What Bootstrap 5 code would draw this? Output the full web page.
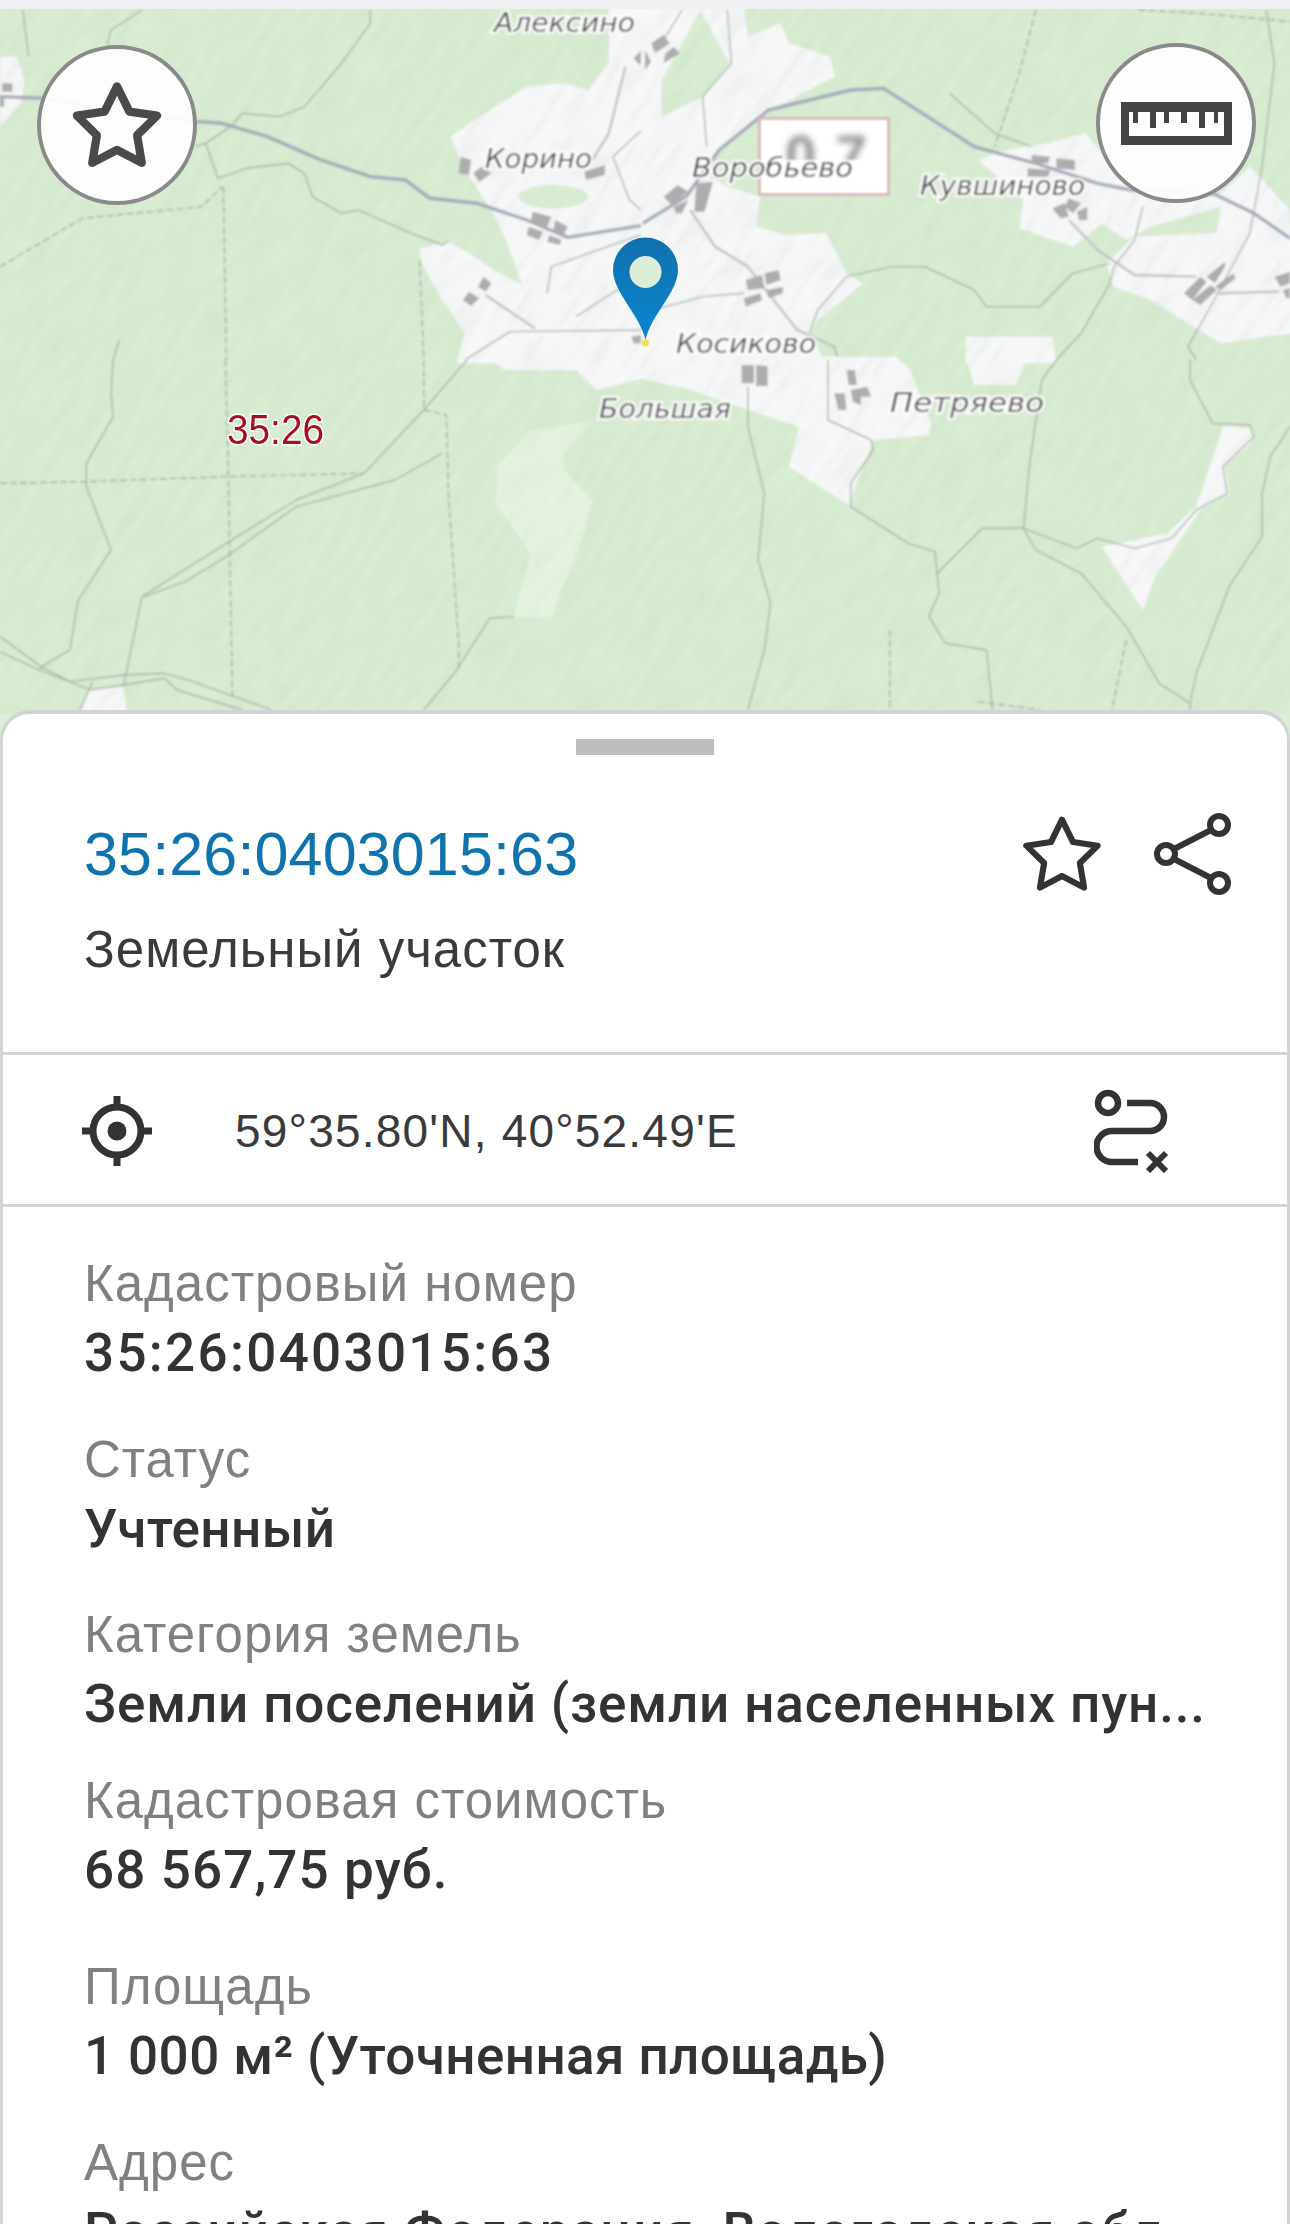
<!DOCTYPE html>
<html lang="ru">
<head>
<meta charset="UTF-8">
<title>Земельный участок</title>
<link href="https://cdn.jsdelivr.net/npm/bootstrap@5.3.3/dist/css/bootstrap.min.css" rel="stylesheet">
<style>
  body { font-family: "Liberation Sans", Arial, sans-serif; color: #333; background: #dcefd6; }
  .top-strip { height: 9px; background: #f0f0f2; }
  .map-wrap { height: 705px; }
  .map-svg { display: block; width: 1290px; height: 705px; }
  .tile path, .tile ellipse { vector-effect: non-scaling-stroke; }
  .snow { fill: #f8f8fa; stroke: none; }
  .green { fill: #d9edd3; stroke: none; }
  .pale { fill: #e6f3e1; stroke: none; }
  .bld { fill: #adadad; stroke: none; }
  .ln { fill: none; stroke: #aab4aa; stroke-width: 1.4; stroke-linejoin: round; }
  .ln2 { fill: none; stroke: #c0c3c3; stroke-width: 2.4; stroke-linejoin: round; }
  .dash { fill: none; stroke: #a5b1a5; stroke-width: 1.4; stroke-dasharray: 7 3; }
  .road { fill: none; stroke: #a6abb9; stroke-width: 3.4; stroke-linejoin: round; }
  .place { font-family: "DejaVu Sans", sans-serif; font-style: oblique; font-size: 26px; fill: #555; stroke: #fff; stroke-width: 4px; paint-order: stroke; }
  .zone { font-family: "Liberation Sans", sans-serif; font-size: 42px; fill: #a80f1d; stroke: #fff; stroke-width: 3px; paint-order: stroke; }
  .map-btn { width: 160px; height: 160px; background: rgba(255,255,255,.93); border: 4px solid #8a8a8a; }
  .btn-star { left: 37px; top: 36px; }
  .btn-ruler { left: 1096px; top: 34px; }
  .sheet { margin-top: -4px; background: #fff; border: 3px solid #d2d3d5; border-top-width: 4px; border-bottom: 0; border-radius: 30px 30px 0 0; z-index: 2; }
  .grab { width: 138px; height: 16px; background: #bdbdbf; margin-bottom: 64px; }
  .sheet-head { padding: 25px 81px 72px; }
  .cad-title { font-size: 61px; line-height: 70px; letter-spacing: .15px; color: #0f73ad; }
  .cad-sub { font-size: 51px; line-height: 60px; letter-spacing: 1px; margin-top: 31px; color: #3a3a3a; }
  .title-icons { right: 55px; top: 99px; gap: 51px; }
  .coords { height: 155px; padding: 3px 81px 0 79px; border-top: 3px solid #d2d3d5; border-bottom: 3px solid #d2d3d5; font-size: 46px; letter-spacing: 1.2px; color: #3a3a3a; }
  .coord-text { margin-left: 83px; }
  .route-ico { margin-left: auto; margin-right: 34px; }
  .facts { padding: 42px 60px 0 81px; }
  .fact { margin-bottom: 37.500px; }
  .fact-tight { margin-bottom: 28px; }
  .fact-loose { margin-bottom: 48px; }
  .fact-key { font-size: 51px; line-height: 70px; letter-spacing: 1px; color: #808080; }
  .fact-val { font-size: 53px; line-height: 68px; font-family: Roboto, "Liberation Sans", sans-serif; font-weight: 500; letter-spacing: .4px; color: #333; white-space: nowrap; }
  .val-digits { letter-spacing: 2.300px; }
  .val-mixed { letter-spacing: 1.100px; }
  .val-wide { letter-spacing: .85px; }
  .val-address { letter-spacing: 1.100px; }
</style>
</head>
<body class="vh-100 overflow-hidden">

<div class="top-strip"></div>

<div class="map-wrap position-relative">
  <svg class="map-svg" viewBox="0 9 1290 705" xmlns="http://www.w3.org/2000/svg">
    <defs>
      <filter id="soft" x="0" y="0" width="100%" height="100%"><feGaussianBlur stdDeviation="0.9"/></filter>
      <filter id="hill" filterUnits="userSpaceOnUse" x="-900" y="-900" width="3200" height="3200">
        <feTurbulence type="fractalNoise" baseFrequency="0.02 0.12" numOctaves="3" seed="4"/>
        <feColorMatrix values="0 0 0 0 0.42  0 0 0 0 0.56  0 0 0 0 0.42  1.4 0 0 0 -0.52"/>
        <feGaussianBlur stdDeviation="1"/>
      </filter>
      <filter id="blurry"><feGaussianBlur stdDeviation="3"/></filter>
      <linearGradient id="pinFill" x1="0" y1="0" x2="0" y2="1">
        <stop offset="0" stop-color="#1170ad"/>
        <stop offset="1" stop-color="#0a86cf"/>
      </linearGradient>
      <clipPath id="boxClip"><rect x="760" y="120" width="128" height="40"/></clipPath>
    </defs>

    <rect x="0" y="0" width="1290" height="720" fill="#d9edd3"/>

    <g filter="url(#soft)">
      <!-- top left -->
      <g class="tile" transform="scale(.4114 .3333)">
        <path class="snow" d="M0 170L40 170 60 240 50 310 0 380Z"/>
        <path class="snow" d="M1480 20L1480 190 1430 270 1370 250 1280 260 1180 340 1095 410 1130 510 1200 640 1230 720 1270 855 1200 810 1140 760 1090 725 1020 745 1025 790 1075 900 1130 1000 1110 1090 1580 1090 1580 20Z"/>
        <ellipse class="green" cx="1345" cy="590" rx="85" ry="35"/>
        <path class="ln" d="M55 30L70 170M345 30L270 90 260 135M900 30L900 70 830 190 740 320 680 350 590 340 560 380 500 430 475 440M500 430L530 535 600 505 700 490 740 520 760 590 830 640 870 630 1000 700 1075 735 1090 725M290 1020L275 1080"/>
        <path class="ln" d="M1130 1080L1240 995 1568 990M1568 380L1490 470 1530 600 1568 640M1330 880L1340 800 1568 700M1400 950L1500 870 1568 880"/>
        <path class="ln2" d="M1520 200L1480 400 1440 480M1180 885L1300 985"/>
        <path class="dash" d="M0 800L200 655 490 620 540 560M543 560L550 1080M1020 780L1030 1080"/>
        <path class="road" d="M0 290L100 295 480 365 540 370 650 410 780 480 900 530 985 540 1045 595 1160 610 1280 660 1380 712 1568 675"/>
        <path class="bld" d="M1540 175L1568 140 1568 180 1555 195ZM1120 470L1145 480 1140 525 1115 520ZM1150 520L1170 500 1195 520 1165 545ZM1420 515L1470 495 1470 525 1425 540ZM1295 635L1340 650 1330 680 1290 665ZM1350 660L1380 680 1370 705 1345 690ZM1285 680L1320 695 1310 720 1280 705ZM1335 705L1365 720 1360 735 1330 725ZM1175 830L1195 850 1180 875 1162 860ZM1140 875L1165 895 1145 918 1125 900ZM1535 1010L1560 1005 1560 1030 1540 1030ZM5 250L30 250 30 275 5 275ZM0 290L10 290 10 320 0 320Z"/>
      </g>

      <!-- top right -->
      <g class="tile" transform="translate(645 0) scale(.4114 .3333)">
        <path class="snow" d="M-10 20L240 20 250 110 330 70 350 130 450 170 460 230 290 340 180 450 140 520 200 560 280 590 270 680 340 705 440 700 490 820 530 850 420 960 400 1000 440 1090 -10 1090Z"/>
        <path class="green" d="M135 30L165 100 205 190 140 290 40 350 40 240 90 130Z"/>
        <path class="snow" d="M810 480L860 455 980 430 1070 400 1130 490 1250 600 1390 590 1470 500 1568 630 1580 1000 1500 1010 1400 1030 1320 970 1230 900 1140 860 1120 790 1190 710 1390 700 1400 620 1230 680 1170 720 1110 670 1040 740 910 685 920 600Z"/>
        <path class="snow" d="M780 1010L990 1010 1000 1090 780 1090Z"/>
        <path class="ln" d="M90 30L40 130M200 30L210 190 140 290 150 440M20 930L140 890 240 880M490 830L600 800 680 800 800 870 830 920 960 920 1040 820 1130 790M490 830L420 930 400 1000M1210 620L1190 720 1140 800 1130 850 1060 1000 1000 1080M1510 30L1530 190 1500 500 1470 700 1370 930 1320 1040 1340 1080M740 280L850 400 940 440"/>
        <path class="ln2" d="M110 630L170 740 250 800 300 880 370 990 460 1040 470 1080M1030 660L1100 750 1190 825 1340 830M1390 880L1540 875"/>
        <path class="dash" d="M950 30L910 220 850 440M1200 30L1350 40 1568 65"/>
        <path class="road" d="M-5 670L100 590 180 450 300 330 500 270 580 265 800 440 950 490 1100 550 1180 570 1380 580 1480 640 1568 715"/>
        <path class="bld" d="M15 130L45 105 60 130 25 160ZM50 160L70 140 85 160 45 190ZM0 150L15 185 0 210ZM45 590L80 555 105 575 65 615ZM70 620L105 600 90 640 75 640ZM125 550L165 545 145 635 120 635ZM245 840L285 825 290 865 250 870ZM290 820L325 810 330 840 295 855ZM240 895L280 880 285 900 245 920ZM295 870L335 860 335 880 300 895ZM940 465L985 470 980 490 940 490ZM1000 475L1045 480 1045 510 1000 505ZM930 505L985 510 980 530 930 530ZM990 625L1020 610 1030 650 1010 655ZM1030 595L1060 610 1040 640 1020 620ZM1050 635L1075 620 1075 660 1055 660ZM1310 880L1350 830 1365 845 1330 900ZM1330 900L1375 855 1390 870 1350 915ZM1365 830L1410 785 1410 800 1385 850ZM1385 860L1430 820 1435 835 1400 870ZM1530 830L1568 815 1568 850 1545 860ZM1550 870L1568 865 1568 895 1560 895Z"/>
      </g>

      <!-- bottom left -->
      <g class="tile" transform="translate(0 360) scale(.4114 .3333)">
        <path class="snow" d="M1190 -10L1190 0 1230 30 1400 30 1450 90 1580 50 1580 -10ZM215 990L300 980 310 1070 190 1070Z"/>
        <path class="pale" d="M1440 180L1370 280 1370 330 1440 420 1420 520 1340 770 1250 770 1290 580 1205 430 1210 320 1290 210 1340 205Z"/>
        <path class="ln" d="M275 0L270 100 275 170 210 310 210 380 270 570 190 720 170 870 95 925M0 830L100 920 170 965 300 945 400 940 470 965 660 1050M0 875L95 930 220 990 300 975 400 955 430 990 590 1050M1135 0L1030 150 885 340 720 420 550 550 345 710 330 800 300 980M1075 280L960 360 720 440 550 590 450 665 350 710M225 965L195 1050M1250 770L1190 775 1110 930 1030 1050"/>
        <path class="dash" d="M0 370L210 365 550 350 880 340M548 0L555 350 565 1010M1030 0L1030 150 1085 165 1090 400 1115 850 1115 930"/>
      </g>

      <!-- bottom right -->
      <g class="tile" transform="translate(645 360) scale(.4114 .3333)">
        <path class="snow" d="M-10 -10L610 -10 645 30 695 190 690 225 555 240 530 320 495 435 350 320 375 200 250 150 100 85 0 60ZM780 -10L930 -10 900 75 800 75ZM1405 200L1475 205 1475 245 1410 320 1420 400 1350 450 1240 650 1210 750 1110 560 1270 520 1340 440Z"/>
        <path class="ln" d="M250 80L250 200 290 400 275 600 305 730 290 870 250 1050M445 0L445 180 550 240 555 270 500 370 500 440 640 550 705 575 710 640 715 700 690 770 730 850 830 870 845 1050M710 640L820 505 920 505 1050 565 1100 535 1190 565 1280 535 1340 450 1415 400 1405 320 1480 230 1470 195 1380 190 1350 120 1325 60 1325 0M1000 0L965 60 935 310 920 505 950 570 1060 640 1170 800 1250 970 1325 1030 1340 940 1420 680 1500 530 1500 400 1520 290 1568 200M1325 1030L1325 1050"/>
        <path class="dash" d="M595 810L595 1050M1170 840L1135 1050M810 1025L960 1050"/>
        <path class="bld" d="M235 15L265 15 265 70 235 70ZM270 15L298 18 298 78 270 78ZM490 30L510 30 515 75 495 75ZM460 100L485 100 490 150 470 150ZM500 90L540 80 550 110 525 110 525 135 505 125Z"/>
      </g>

      <rect x="-900" y="-900" width="3200" height="3200" transform="rotate(-55 645 360)" filter="url(#hill)" opacity="0.22"/>

      <rect x="759.500" y="118.500" width="129" height="76" fill="#fff" stroke="#d8b9b9" stroke-width="3"/>
      <g clip-path="url(#boxClip)"><text x="785" y="174" font-family="Liberation Sans, sans-serif" font-size="56" font-weight="700" fill="#8e8e8e" filter="url(#blurry)" textLength="82">0.7</text></g>

      <text class="place" x="494" y="32" textLength="141" lengthAdjust="spacingAndGlyphs">Алексино</text>
      <text class="place" x="485" y="168" textLength="107" lengthAdjust="spacingAndGlyphs">Корино</text>
      <text class="place" x="692" y="177" textLength="161" lengthAdjust="spacingAndGlyphs">Воробьево</text>
      <text class="place" x="920" y="195" textLength="165" lengthAdjust="spacingAndGlyphs">Кувшиново</text>
      <text class="place" x="676" y="353" textLength="140" lengthAdjust="spacingAndGlyphs">Косиково</text>
      <text class="place" x="599" y="418" textLength="132" lengthAdjust="spacingAndGlyphs">Большая</text>
      <text class="place" x="890" y="412" textLength="154" lengthAdjust="spacingAndGlyphs">Петряево</text>
    </g>
    <text class="zone" x="227" y="444" textLength="97" lengthAdjust="spacingAndGlyphs">35:26</text>

    <!-- marker -->
    <circle cx="645.500" cy="272" r="17" fill="#dcedd8"/>
    <path d="M645.500 340C640 315 613 292 613 270A32.500 32.500 0 1 1 678 270C678 292 651 315 645.500 340ZM645.500 256A16 16 0 1 0 645.500 288A16 16 0 1 0 645.500 256Z" fill="url(#pinFill)" fill-rule="evenodd"/>
    <circle cx="645.500" cy="343" r="3.500" fill="#f3e14f"/>
  </svg>

  <button class="map-btn btn btn-star position-absolute rounded-circle d-flex align-items-center justify-content-center p-0" type="button" aria-label="Избранное">
    <svg width="92" height="90" viewBox="0 0 100 98"><path d="M50 7L63.500 34.400 93.700 38.800 71.900 60.100 77 90.200 50 76 23 90.200 28.100 60.100 6.300 38.800 36.500 34.400Z" fill="none" stroke="#4a4a4a" stroke-width="9" stroke-linejoin="round"/></svg>
  </button>
  <button class="map-btn btn btn-ruler position-absolute rounded-circle d-flex align-items-center justify-content-center p-0" type="button" aria-label="Линейка">
    <svg width="111" height="43" viewBox="0 0 111 43"><path d="M0 0H111V43H0ZM8 10V34H103V10H97V21H93V10H84V26H78V10H66V21H60V10H48V21H43V10H35V26H29V10H17V21H12V10Z" fill="#444" fill-rule="evenodd"/></svg>
  </button>
</div>

<div class="sheet position-relative">
  <div class="sheet-head position-relative">
    <div class="grab mx-auto"></div>
    <div class="cad-title">35:26:0403015:63</div>
    <div class="cad-sub">Земельный участок</div>
    <div class="title-icons position-absolute d-flex align-items-center">
      <svg width="82" height="80" viewBox="0 0 100 98"><path d="M50 7L63.500 34.400 93.700 38.800 71.900 60.100 77 90.200 50 76 23 90.200 28.100 60.100 6.300 38.800 36.500 34.400Z" fill="none" stroke="#333" stroke-width="7.500" stroke-linejoin="round"/></svg>
      <svg width="78" height="82" viewBox="0 0 78 82" fill="none" stroke="#333" stroke-width="6"><circle cx="65" cy="12" r="9"/><circle cx="12" cy="41" r="9"/><circle cx="65" cy="70" r="9"/><path d="M20 36L57 17M20 46L57 65"/></svg>
    </div>
  </div>

  <div class="coords d-flex align-items-center">
    <svg width="70" height="70" viewBox="0 0 70 70"><circle cx="35" cy="35" r="24" fill="none" stroke="#333" stroke-width="7"/><circle cx="35" cy="35" r="9.500" fill="#333"/><path d="M35 0V10M35 60V70M0 35H10M60 35H70" stroke="#333" stroke-width="7"/></svg>
    <span class="coord-text">59°35.80'N, 40°52.49'E</span>
    <svg class="route-ico" width="78" height="84" viewBox="0 0 78 84" fill="none" stroke="#333" stroke-width="6.500"><circle cx="14" cy="14" r="10"/><path d="M33 14H56A14 14 0 0 1 56 42H18A15 15 0 0 0 18 73H44"/><path d="M54 64L72 82M72 64L54 82" stroke-width="6"/></svg>
  </div>

  <div class="facts">
    <div class="fact">
      <div class="fact-key">Кадастровый номер</div>
      <div class="fact-val val-digits">35:26:0403015:63</div>
    </div>
    <div class="fact">
      <div class="fact-key">Статус</div>
      <div class="fact-val">Учтенный</div>
    </div>
    <div class="fact fact-tight">
      <div class="fact-key">Категория земель</div>
      <div class="fact-val val-wide">Земли поселений (земли населенных пун...</div>
    </div>
    <div class="fact fact-loose">
      <div class="fact-key">Кадастровая стоимость</div>
      <div class="fact-val val-mixed">68 567,75 руб.</div>
    </div>
    <div class="fact">
      <div class="fact-key">Площадь</div>
      <div class="fact-val">1 000 м² (Уточненная площадь)</div>
    </div>
    <div class="fact">
      <div class="fact-key">Адрес</div>
      <div class="fact-val val-address">Российская Федерация, Вологодская обл.</div>
    </div>
  </div>
</div>

<script src="https://cdn.jsdelivr.net/npm/bootstrap@5.3.3/dist/js/bootstrap.bundle.min.js"></script>
</body>
</html>
